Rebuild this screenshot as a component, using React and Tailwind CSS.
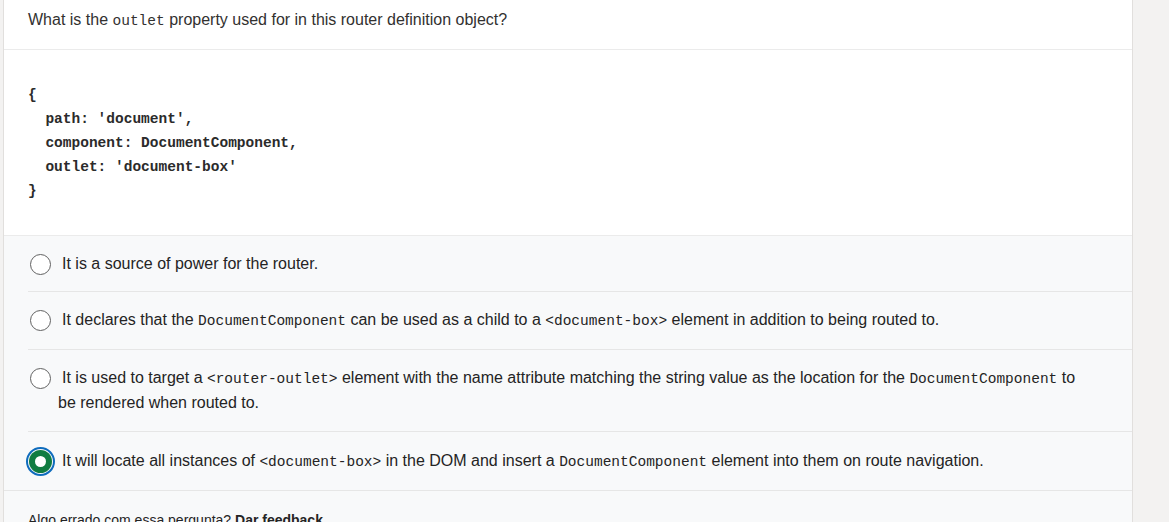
import React from 'react';

const mono = "font-['Liberation_Mono',monospace]";

function Code({ children }) {
  return <code className={`${mono} text-[14.5px]`}>{children}</code>;
}

function Radio({ checked }) {
  if (checked) {
    return (
      <span className="flex h-[29px] w-[29px] shrink-0 items-center justify-center rounded-full border-2 border-[#0f6cbd]">
        <span className="flex h-[23px] w-[23px] items-center justify-center rounded-full bg-[#107c41]">
          <span className="h-[11px] w-[11px] rounded-full bg-white" />
        </span>
      </span>
    );
  }
  return (
    <span className="flex h-[29px] w-[29px] shrink-0 items-center justify-center">
      <span className="h-[21px] w-[21px] rounded-full border border-[#616161] bg-white" />
    </span>
  );
}

const options = [
  { id: 1, body: <>It is a source of power for the router.</> },
  {
    id: 2,
    body: (
      <>
        It declares that the <Code>DocumentComponent</Code> can be used as a child to a{' '}
        <Code>&lt;document-box&gt;</Code> element in addition to being routed to.
      </>
    ),
  },
  {
    id: 3,
    body: (
      <>
        It is used to target a <Code>&lt;router-outlet&gt;</Code> element with the name attribute matching the
        string value as the location for the <Code>DocumentComponent</Code> to be rendered when routed to.
      </>
    ),
  },
  {
    id: 4,
    checked: true,
    body: (
      <>
        It will locate all instances of <Code>&lt;document-box&gt;</Code> in the DOM and insert a{' '}
        <Code>DocumentComponent</Code> element into them on route navigation.
      </>
    ),
  },
];

export default function App() {
  return (
    <div className="flex h-[522px] w-full overflow-hidden bg-[#f3f2f1] font-['Liberation_Sans',sans-serif]">
      <div className="w-[4px] shrink-0 border-r border-[#e1dfdd]" />
      <main className="flex w-[1129px] shrink-0 flex-col border-r border-[#e1dfdd] bg-white">
        {/* Pergunta */}
        <div className="flex h-[50px] shrink-0 items-center border-b border-[#ebebeb] px-6 pb-[9px] text-[16px] text-[#323130]">
          <p>
            What is the <Code>outlet</Code> property used for in this router definition object?
          </p>
        </div>

        {/* Bloco de código */}
        <pre className={`${mono} h-[185px] shrink-0 px-6 pt-[33px] text-[14.5px] font-bold leading-[24px] text-[#2b2b2b]`}>
{`{
  path: 'document',
  component: DocumentComponent,
  outlet: 'document-box'
}`}
        </pre>

        {/* Alternativas */}
        <div className="flex-1 border-t border-[#ebebeb] bg-[#f8f9fa]">
          <ul className="pl-6">
            {options.map((opt, i) => (
              <li
                key={opt.id}
                className={`flex items-start gap-[3px] border-b border-[#e6e6e6] pr-[38px] text-[16px] leading-[24px] text-[#242424] ${
                  i === 0 ? 'pt-4 pb-[15px]' : 'py-4'
                } ${i === 3 ? 'pt-[17px] pb-[16px]' : ''}`}
              >
                <span className="-ml-[2px] flex h-[24px] items-center">
                  <Radio checked={opt.checked} />
                </span>
                <p className="indent-[4px]">{opt.body}</p>
              </li>
            ))}
          </ul>
          <div className="-mt-px border-t border-[#e6e6e6] px-6 pt-[19px] text-[14px] text-[#242424]">
            Algo errado com essa pergunta? <span className="font-semibold">Dar feedback</span>
          </div>
        </div>
      </main>
    </div>
  );
}
